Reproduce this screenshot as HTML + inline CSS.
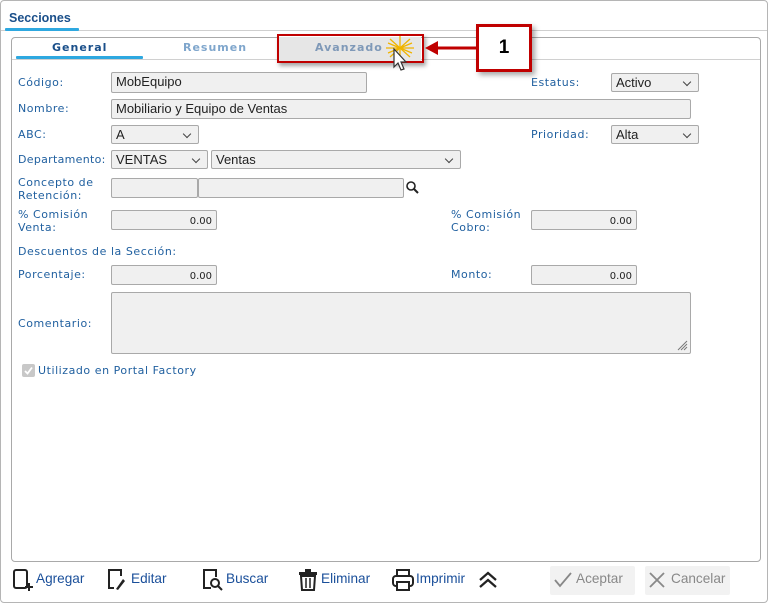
<!DOCTYPE html>
<html><head><meta charset="utf-8"><style>
*{box-sizing:border-box;margin:0;padding:0}
body{width:770px;height:604px;background:#fff;font-family:"DejaVu Sans","Liberation Sans",sans-serif;position:relative;overflow:hidden}
.a{position:absolute}
.lbl{position:absolute;font-size:11px;color:#1f5f9f;letter-spacing:0.55px;line-height:13px}
.inp{position:absolute;background:#f0f0f0;border:1px solid #a9a9a9;border-radius:2px;font-family:"Liberation Sans",sans-serif;font-size:13px;color:#222;padding:1px 4px;line-height:16px}
.num{text-align:right;font-family:"DejaVu Sans",sans-serif;font-size:10px;padding-top:3px}
.sel:after{content:"";position:absolute;right:8px;top:5px;width:5px;height:5px;border-right:1.3px solid #444;border-bottom:1.3px solid #444;transform:rotate(45deg)}
.tb{position:absolute;top:571px;font-family:"Liberation Sans",sans-serif;font-size:13.6px;color:#1a4f9a}
.tbi{position:absolute;top:568px}
</style></head><body>
<div class="a" style="left:0;top:0;width:768px;height:603px;border:1px solid #b5b5b5;border-radius:4px"></div>
<div class="a" style="left:1px;top:30px;width:766px;height:1px;background:#cfcfcf"></div>
<div class="a" style="left:9px;top:11px;font-family:'Liberation Sans',sans-serif;font-weight:bold;font-size:12.5px;color:#1a4f8a">Secciones</div>
<div class="a" style="left:5px;top:28px;width:74px;height:3px;background:#2ea8e0;border-radius:1px"></div>
<div class="a" style="left:11px;top:37px;width:750px;height:525px;border:1px solid #a9a9a9;border-radius:4px"></div>
<div class="a" style="left:12px;top:59px;width:748px;height:1px;background:#d0d0d0"></div>
<div class="a" style="left:52px;top:41px;font-weight:bold;font-size:11px;color:#1a4f8a;letter-spacing:1px">General</div>
<div class="a" style="left:16px;top:56px;width:127px;height:3px;background:#2ea8e0;border-radius:1px"></div>
<div class="a" style="left:183px;top:41px;font-weight:bold;font-size:11px;color:#7fa6cc;letter-spacing:1px">Resumen</div>
<div class="a" style="left:279px;top:37px;width:142px;height:24px;background:#e6e6e6"></div>
<div class="a" style="left:315px;top:41px;font-weight:bold;font-size:11px;color:#7f99b8;letter-spacing:1px">Avanzado</div>
<div class="a" style="left:277px;top:34px;width:147px;height:29px;border:2px solid #c00000;box-shadow:2px 3px 4px rgba(0,0,0,.35)"></div>
<svg class="a" style="left:383px;top:34px" width="36" height="42" viewBox="0 0 36 42">
<g stroke="#f0b400" stroke-width="1.3"><line x1="3" y1="14" x2="31" y2="14"/><line x1="17" y1="2" x2="17" y2="26"/><line x1="7" y1="5" x2="27" y2="23"/><line x1="27" y1="5" x2="7" y2="23"/><line x1="5" y1="9" x2="29" y2="19"/><line x1="29" y1="9" x2="5" y2="19"/></g>
<path d="M11 15 L11 33 L15 29 L18 36 L21 35 L18 28 L23 28 Z" fill="#fff" stroke="#333" stroke-width="1.2"/></svg>
<svg class="a" style="left:424px;top:40px" width="54" height="16"><line x1="12" y1="8" x2="54" y2="8" stroke="#c00000" stroke-width="3"/><path d="M1 8 L14 1 L14 15 Z" fill="#c00000"/></svg>
<div class="a" style="left:476px;top:24px;width:56px;height:48px;border:3px solid #c00000;background:#fff;box-shadow:3px 3px 5px rgba(0,0,0,.35);font-family:'Liberation Sans',sans-serif;font-weight:bold;font-size:19px;text-align:center;line-height:42px">1</div>

<div class="lbl" style="left:18px;top:76px">Código:</div>
<div class="inp" style="left:111px;top:72px;width:256px;height:21px">MobEquipo</div>
<div class="lbl" style="left:531px;top:76px">Estatus:</div>
<div class="inp sel" style="left:611px;top:73px;width:88px;height:19px;line-height:15px">Activo</div>
<div class="lbl" style="left:18px;top:102px">Nombre:</div>
<div class="inp" style="left:111px;top:99px;width:580px;height:20px;line-height:16px">Mobiliario y Equipo de Ventas</div>
<div class="lbl" style="left:18px;top:128px">ABC:</div>
<div class="inp sel" style="left:111px;top:125px;width:88px;height:19px;line-height:15px">A</div>
<div class="lbl" style="left:531px;top:128px">Prioridad:</div>
<div class="inp sel" style="left:611px;top:125px;width:88px;height:19px;line-height:15px">Alta</div>
<div class="lbl" style="left:18px;top:153px;letter-spacing:0.3px">Departamento:</div>
<div class="inp sel" style="left:111px;top:150px;width:97px;height:19px;line-height:15px">VENTAS</div>
<div class="inp sel" style="left:211px;top:150px;width:250px;height:19px;line-height:15px">Ventas</div>
<div class="lbl" style="left:18px;top:176px">Concepto de<br>Retención:</div>
<div class="inp" style="left:111px;top:178px;width:87px;height:20px"></div>
<div class="inp" style="left:198px;top:178px;width:206px;height:20px"></div>
<svg class="a" style="left:405px;top:180px" width="16" height="16"><circle cx="6" cy="6" r="4" fill="none" stroke="#222" stroke-width="1.6"/><line x1="9" y1="9" x2="13" y2="13" stroke="#222" stroke-width="2"/></svg>
<div class="lbl" style="left:18px;top:208px">% Comisión<br>Venta:</div>
<div class="inp num" style="left:111px;top:210px;width:106px;height:20px">0.00</div>
<div class="lbl" style="left:451px;top:208px">% Comisión<br>Cobro:</div>
<div class="inp num" style="left:531px;top:210px;width:106px;height:20px">0.00</div>
<div class="lbl" style="left:18px;top:245px">Descuentos de la Sección:</div>
<div class="lbl" style="left:18px;top:268px">Porcentaje:</div>
<div class="inp num" style="left:111px;top:265px;width:106px;height:20px">0.00</div>
<div class="lbl" style="left:451px;top:268px">Monto:</div>
<div class="inp num" style="left:531px;top:265px;width:106px;height:20px">0.00</div>
<div class="lbl" style="left:18px;top:317px">Comentario:</div>
<div class="inp" style="left:111px;top:292px;width:580px;height:62px"></div>
<svg class="a" style="left:676px;top:339px" width="12" height="12"><g stroke="#777" stroke-width="1"><line x1="11" y1="2" x2="2" y2="11"/><line x1="11" y1="5" x2="5" y2="11"/><line x1="11" y1="8" x2="8" y2="11"/></g></svg>
<div class="a" style="left:22px;top:364px;width:13px;height:13px;background:#c8c8c8;border-radius:2px"></div>
<svg class="a" style="left:22px;top:364px" width="13" height="13"><path d="M3 7 L5.5 9.5 L10 3.5" fill="none" stroke="#fff" stroke-width="1.8"/></svg>
<div class="lbl" style="left:38px;top:364px">Utilizado en Portal Factory</div>

<svg class="tbi" style="left:12px" width="22" height="26"><rect x="2" y="2" width="13" height="18" rx="2" fill="none" stroke="#222" stroke-width="2"/><path d="M13 19 h8 M17 15 v8" stroke="#222" stroke-width="2"/></svg>
<div class="tb" style="left:36px">Agregar</div>
<svg class="tbi" style="left:106px" width="22" height="26"><path d="M15 8 V2 H3 V20 H8" fill="none" stroke="#222" stroke-width="2"/><path d="M10 21 L17 11 L19 13 L12 22 Z" fill="#222"/></svg>
<div class="tb" style="left:131px">Editar</div>
<svg class="tbi" style="left:201px" width="24" height="26"><path d="M10 20 H3 V2 H15 V9" fill="none" stroke="#222" stroke-width="2"/><circle cx="14" cy="15" r="4" fill="none" stroke="#222" stroke-width="2"/><line x1="17" y1="18" x2="21" y2="22" stroke="#222" stroke-width="2"/></svg>
<div class="tb" style="left:226px">Buscar</div>
<svg class="tbi" style="left:298px" width="20" height="26"><rect x="7" y="1" width="6" height="3" fill="#222"/><rect x="1" y="4" width="18" height="3" fill="#222"/><path d="M3 8 H17 L16 22 H4 Z" fill="none" stroke="#222" stroke-width="2"/><path d="M8 10 V20 M12 10 V20" stroke="#222" stroke-width="1.5"/></svg>
<div class="tb" style="left:321px">Eliminar</div>
<svg class="tbi" style="left:392px" width="22" height="26"><rect x="5" y="2" width="12" height="6" fill="none" stroke="#222" stroke-width="2"/><rect x="1" y="8" width="20" height="10" rx="3" fill="none" stroke="#222" stroke-width="2"/><rect x="5" y="14" width="12" height="8" fill="#fff" stroke="#222" stroke-width="2"/></svg>
<div class="tb" style="left:416px">Imprimir</div>
<svg class="tbi" style="left:477px" width="22" height="26"><path d="M3 12 L11 5 L19 12 M3 19 L11 12 L19 19" fill="none" stroke="#222" stroke-width="2.2"/></svg>
<div class="a" style="left:550px;top:566px;width:85px;height:29px;background:#f2f2f2;border-radius:2px"></div>
<svg class="a" style="left:553px;top:571px" width="20" height="18"><path d="M2 9 L7 15 L18 2" fill="none" stroke="#888" stroke-width="1.8"/></svg>
<div class="tb" style="left:576px;color:#888">Aceptar</div>
<div class="a" style="left:645px;top:566px;width:85px;height:29px;background:#f2f2f2;border-radius:2px"></div>
<svg class="a" style="left:648px;top:571px" width="18" height="18"><path d="M2 2 L16 16 M16 2 L2 16" stroke="#888" stroke-width="1.8"/></svg>
<div class="tb" style="left:671px;color:#888">Cancelar</div>
</body></html>
